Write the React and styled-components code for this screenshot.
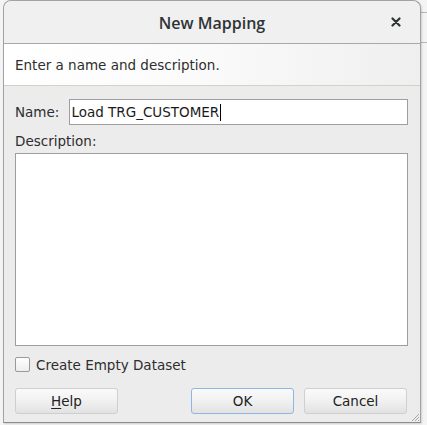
import React from 'react';
import styled, { createGlobalStyle } from 'styled-components';

const Global = createGlobalStyle`
  html, body {
    margin: 0;
    padding: 0;
    background: #f3f3f3;
  }
  body {
    font-family: "DejaVu Sans", "Liberation Sans", sans-serif;
    font-size: 13.5px;
    color: #2e2e2e;
  }
`;

const Page = styled.div`
  width: 427px;
  height: 425px;
  padding-left: 3px;
  box-sizing: border-box;
  overflow: hidden;
  background:
    linear-gradient(#b8b8b8, #b8b8b8) 421px 12px / 6px 1px no-repeat,
    linear-gradient(#b8b8b8, #b8b8b8) 421px 42px / 6px 1px no-repeat,
    #f4f4f4;
`;

const Dialog = styled.div`
  position: relative;
  width: 418px;
  height: 423px;
  box-sizing: border-box;
  display: flex;
  flex-direction: column;
  border: 1px solid #a2a2a2;
  border-bottom-color: #8c8c8c;
  border-radius: 8px 8px 0 0;
  background: #ececec;
  box-shadow: 1px 1px 2px rgba(0, 0, 0, 0.15);
`;

const TitleBar = styled.div`
  height: 42px;
  flex: none;
  display: grid;
  grid-template-columns: 1fr auto 1fr;
  align-items: center;
  background: #f0f0f0;
  border-bottom: 1px solid #a9a9a9;
  border-radius: 8px 8px 0 0;
`;

const Title = styled.div`
  grid-column: 2;
  font-family: "Open Sans", "DejaVu Sans", sans-serif;
  font-weight: 600;
  font-size: 16px;
  color: #2e3436;
  padding-top: 1px;
`;

const Close = styled.div`
  grid-column: 3;
  justify-self: end;
  margin-right: 19px;
  width: 10px;
  height: 10px;
  display: flex;
`;

const Header = styled.div`
  height: 41px;
  flex: none;
  display: flex;
  align-items: center;
  padding: 0 11px;
  background: linear-gradient(to right, #ffffff 0%, #fbfbfb 45%, #efefef 100%);
  border-bottom: 1px solid #d5d1c4;
`;

const Body = styled.div`
  flex: 1;
  display: flex;
  flex-direction: column;
  padding: 13px 12px 0 11px;
`;

const NameRow = styled.div`
  display: flex;
  align-items: center;
  gap: 10px;
  height: 26px;
`;

const Field = styled.div`
  flex: 1;
  height: 26px;
  box-sizing: border-box;
  display: flex;
  align-items: center;
  padding-left: 1px;
  background: #fff;
  border: 1px solid #9e9e9e;
  color: #1a1a1a;
`;

const Caret = styled.span`
  display: inline-block;
  width: 1px;
  height: 17px;
  background: #000;
  margin-left: 1px;
`;

const Label = styled.div`
  margin-top: 8px;
  line-height: 16px;
`;

const Area = styled.div`
  margin-top: 4px;
  height: 193px;
  box-sizing: border-box;
  background: #fff;
  border: 1px solid #9e9e9e;
`;

const CheckRow = styled.label`
  display: flex;
  align-items: center;
  gap: 6px;
  margin-top: 11px;
  height: 15px;
`;

const Box = styled.span`
  width: 15px;
  height: 15px;
  box-sizing: border-box;
  border: 1px solid #9a9a9a;
  border-radius: 2px;
  background: linear-gradient(#ffffff, #ededed);
`;

const Buttons = styled.div`
  display: flex;
  margin-top: 16px;
`;

const Button = styled.div`
  width: 103px;
  height: 26px;
  box-sizing: border-box;
  display: flex;
  align-items: center;
  justify-content: center;
  border: 1px solid ${(p) => (p.$default ? '#90b6e2' : '#cfcfcf')};
  border-radius: 3px;
  background: linear-gradient(#fafafa, #f2f2f2 45%, #e2e2e2);
  color: #222;
  margin-left: ${(p) => p.$gap || 0}px;
  u {
    text-decoration: underline;
    text-underline-offset: 2px;
  }
`;

const Grip = styled.svg`
  position: absolute;
  right: 0;
  bottom: 0;
`;

export default function App() {
  return (
    <Page>
      <Global />
      <Dialog>
        <TitleBar>
          <Title>New Mapping</Title>
          <Close>
            <svg width="10" height="10" viewBox="0 0 10 10">
              <path d="M1.5 1.5 L8.5 8.5 M8.5 1.5 L1.5 8.5" stroke="#2e3436" strokeWidth="2.2" strokeLinecap="round" />
            </svg>
          </Close>
        </TitleBar>
        <Header>Enter a name and description.</Header>
        <Body>
          <NameRow>
            <span>Name:</span>
            <Field>
              Load TRG_CUSTOMER
              <Caret />
            </Field>
          </NameRow>
          <Label>Description:</Label>
          <Area />
          <CheckRow>
            <Box />
            Create Empty Dataset
          </CheckRow>
          <Buttons>
            <Button>
              <u>H</u>elp
            </Button>
            <Button $default $gap={73}>OK</Button>
            <Button $gap={10}>Cancel</Button>
          </Buttons>
        </Body>
        <Grip width="11" height="11" viewBox="0 0 11 11">
          <path d="M10 3 L3 10 M10 6 L6 10 M10 9 L9 10" stroke="#a8a8a8" strokeWidth="1" />
        </Grip>
      </Dialog>
    </Page>
  );
}
